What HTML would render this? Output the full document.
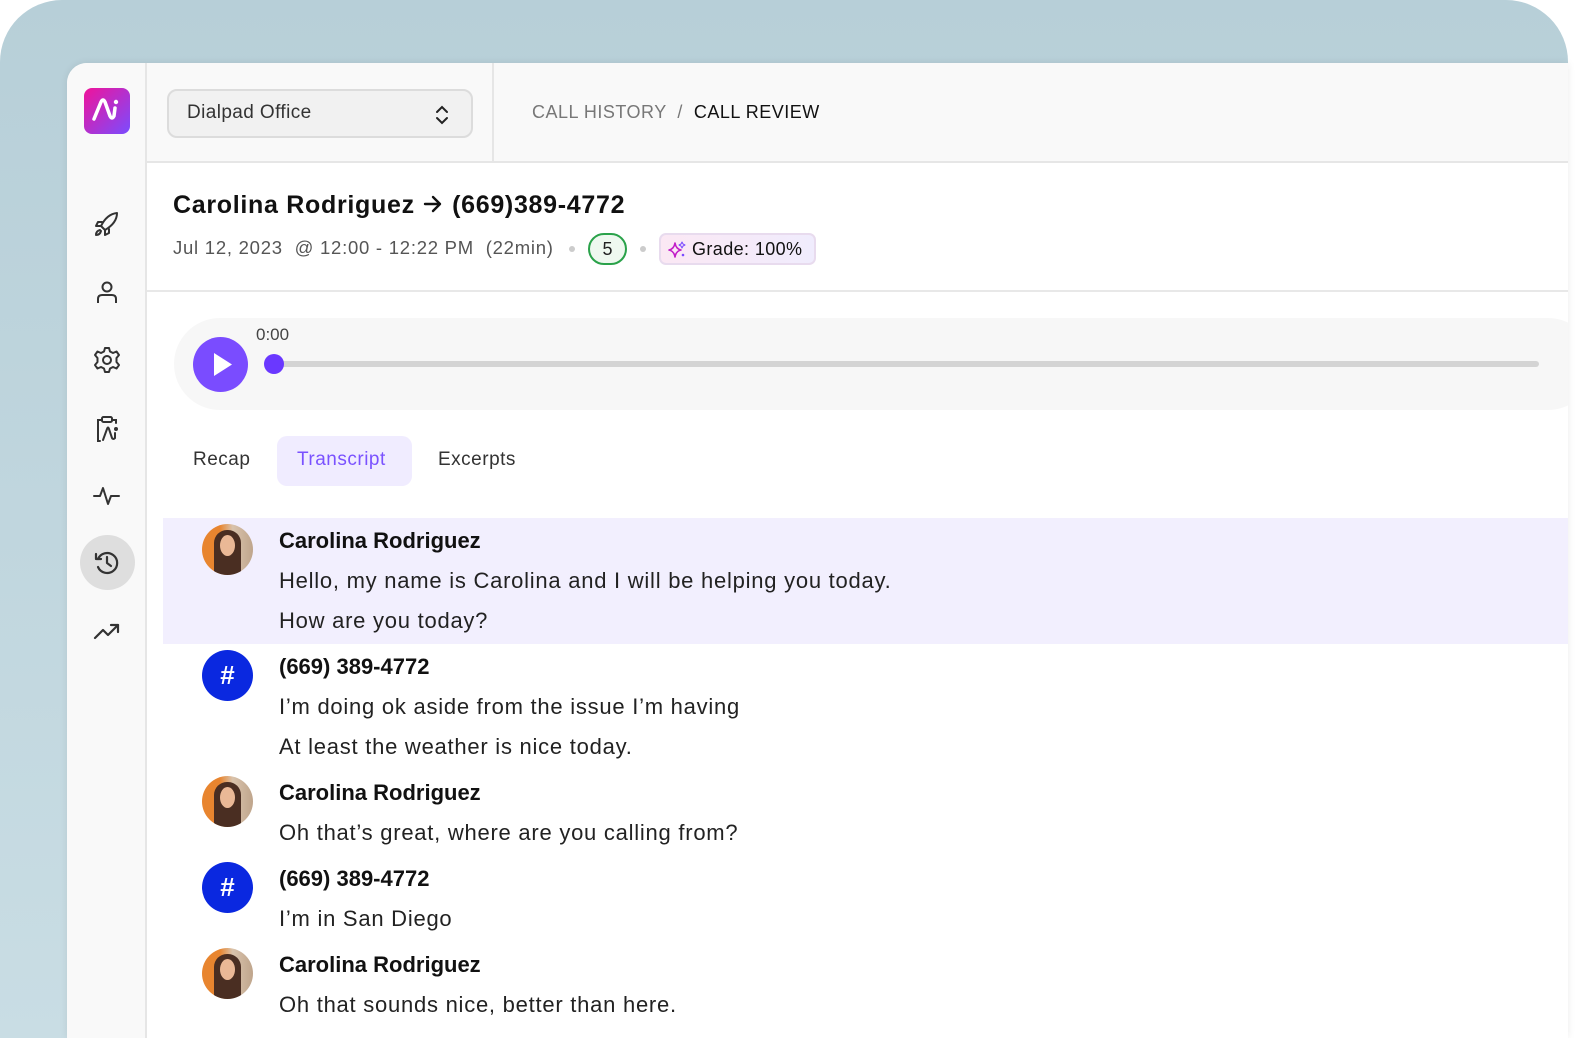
<!DOCTYPE html>
<html><head><meta charset="utf-8"><style>
*{box-sizing:border-box;margin:0;padding:0}
html,body{width:1596px;height:1038px;overflow:hidden;background:#fff;font-family:"Liberation Sans",sans-serif}
.bg{position:absolute;left:0;top:0;width:1568px;height:1038px;border-radius:62px 62px 0 0;background:linear-gradient(180deg,#b7cfd8,#c9dde4)}
.win{position:absolute;left:67px;top:63px;width:1501px;height:975px;background:#fff;border-radius:20px 0 0 0;overflow:hidden;box-shadow:0 0 8px rgba(0,0,0,.08)}
.side{position:absolute;left:0;top:0;width:80px;height:100%;background:#f9f9f9;border-right:2px solid #e6e6e6}
.logo{position:absolute;left:17px;top:25px;width:46px;height:46px;border-radius:8px;background:linear-gradient(135deg,#f0139a,#7a4cff)}
.ic{position:absolute;left:24px;width:32px;height:32px}
.hist{position:absolute;left:13px;top:472px;width:55px;height:55px;border-radius:50%;background:#dedede}
.hdr{position:absolute;left:80px;top:0;right:0;height:100px;background:#f9f9f9;border-bottom:2px solid #e6e6e6}
.sel{position:absolute;left:20px;top:26px;width:306px;height:49px;border:2px solid #dcdcdc;border-radius:10px;background:#f1f1f1;font-size:19px;letter-spacing:.4px;color:#333;padding:11px 0 0 18px}
.vd{position:absolute;left:345px;top:0;width:2px;height:100px;background:#e6e6e6}
.bc{position:absolute;left:385px;top:39px;font-size:18px;letter-spacing:.5px;color:#777}
.bc b{font-weight:normal;color:#111}
.title{position:absolute;left:106px;top:128px;font-size:25px;letter-spacing:.7px;font-weight:bold;color:#111}
.meta{position:absolute;left:106px;top:174px;font-size:18.5px;letter-spacing:.75px;color:#555;white-space:pre}
.dot{position:absolute;width:6px;height:6px;border-radius:50%;background:#ccc;top:183px}
.five{position:absolute;left:521px;top:170px;width:39px;height:32px;border:2px solid #2aa24a;border-radius:16px;background:#eef8ef;text-align:center;font-size:18px;color:#222;line-height:28px}
.grade{position:absolute;left:592px;top:170px;width:157px;height:32px;border:2px solid #e8dbee;border-radius:7px;background:linear-gradient(90deg,#fbe8f4,#f0ecfd);font-size:18px;letter-spacing:.4px;color:#111;padding:4px 0 0 31px}
.hr2{position:absolute;left:80px;right:0;top:227px;height:2px;background:#e8e8e8}
.player{position:absolute;left:107px;top:255px;width:1420px;height:92px;border-radius:46px;background:#f7f7f7}
.play{position:absolute;left:19px;top:19px;width:55px;height:55px;border-radius:50%;background:#7a4cff}
.track{position:absolute;left:95px;top:43px;width:1270px;height:6px;border-radius:3px;background:#d4d4d4}
.knob{position:absolute;left:90px;top:36px;width:20px;height:20px;border-radius:50%;background:#6a38ff}
.time{position:absolute;left:82px;top:7px;font-size:17px;color:#444}
.tab{position:absolute;top:373px;height:50px;font-size:19px;letter-spacing:.5px;color:#333;padding-top:13px}
.tab.on{background:#f0ecff;color:#7a52ff;border-radius:10px;padding-left:20px;width:135px}
.msg{position:absolute;left:96px;width:1420px}
.msg.hl{background:#f2effe}
.av{position:absolute;left:39px;width:51px;height:51px;border-radius:50%;overflow:hidden}
.ph{background:linear-gradient(90deg,#e8852f 0 35%,#d9c3ac 60%,#bfa58c)}
.ph::before{content:"";position:absolute;left:12px;top:6px;width:27px;height:50px;border-radius:13px 13px 4px 4px;background:#4a2e22}
.ph::after{content:"";position:absolute;left:18px;top:11px;width:15px;height:21px;border-radius:50%;background:#eab896}
.hs{background:#0a28e0;color:#fff;font-size:26px;font-weight:bold;text-align:center;line-height:51px}
.n{position:absolute;left:116px;font-size:22px;font-weight:bold;color:#111}
.t{position:absolute;left:116px;font-size:22px;letter-spacing:.75px;color:#222;white-space:nowrap}
</style></head><body>
<div class="bg"></div>
<div class="win">
 <div class="side">
  <div class="logo"><svg width="46" height="46" viewBox="0 0 46 46"><path d="M10 31 L17 14 Q19 10 21 14 L26 28 Q28 32 30 28 L31 20" fill="none" stroke="#fff" stroke-width="3.5" stroke-linecap="round"/><circle cx="32" cy="14" r="2.2" fill="#fff"/></svg></div>
  <svg class="ic" style="top:145px" viewBox="0 0 32 32" fill="none" stroke="#333" stroke-width="2" stroke-linecap="round" stroke-linejoin="round"><path d="M14 22 L10 18 Q16 6 26 5 Q26 15 14 22Z"/><path d="M11 14 H7 L5 18 H10"/><path d="M18 21 V25 L14 27 V22"/><path d="M9 22 Q5 23 5 27 Q9 27 10 23"/></svg>
  <svg class="ic" style="top:213px" viewBox="0 0 32 32" fill="none" stroke="#333" stroke-width="2"><circle cx="16" cy="11" r="4.5"/><path d="M7 27 V23 Q7 19 11 19 H21 Q25 19 25 23 V27"/></svg>
  <svg class="ic" style="top:281px" viewBox="0 0 32 32" fill="none" stroke="#333" stroke-width="2"><circle cx="16" cy="16" r="4"/><path d="M14 4 H18 L19 7.5 L22 9 L25.5 7.5 L28 11 L25.5 14 V18 L28 21 L25.5 24.5 L22 23 L19 24.5 L18 28 H14 L13 24.5 L10 23 L6.5 24.5 L4 21 L6.5 18 V14 L4 11 L6.5 7.5 L10 9 L13 7.5Z" stroke-linejoin="round"/></svg>
  <svg class="ic" style="top:350px" viewBox="0 0 32 32" fill="none" stroke="#333" stroke-width="2" stroke-linecap="round"><path d="M10 7 H7 V28 H9"/><path d="M22 7 H25 V10"/><rect x="11" y="4" width="10" height="5" rx="1.5"/><path d="M12 27 L16 16 Q17 13 18 16 L21 25 Q22 27 24 25 V20"/><circle cx="25" cy="16" r="1" fill="#333"/></svg>
  <svg class="ic" style="top:417px" viewBox="0 0 32 32" fill="none" stroke="#333" stroke-width="2" stroke-linecap="round" stroke-linejoin="round"><path d="M3 16 H9 L12 8 L17 24 L20 16 H28"/></svg>
  <div class="hist"></div>
  <svg class="ic" style="top:484px" viewBox="0 0 32 32" fill="none" stroke="#333" stroke-width="2.2" stroke-linecap="round" stroke-linejoin="round"><path d="M7 12 A10 10 0 1 1 7 20"/><path d="M5 7 V12 H10"/><path d="M16 10 V16 L20 19"/></svg>
  <svg class="ic" style="top:552px" viewBox="0 0 32 32" fill="none" stroke="#333" stroke-width="2.2" stroke-linecap="round" stroke-linejoin="round"><path d="M4 23 L12 15 L17 20 L27 10"/><path d="M20 10 H27 V17"/></svg>
 </div>
 <div class="hdr">
  <div class="sel">Dialpad Office
   <svg style="position:absolute;left:266px;top:14px" width="14" height="20" viewBox="0 0 14 20" fill="none" stroke="#222" stroke-width="2" stroke-linecap="round"><path d="M2 7 L7 2 L12 7 M2 13 L7 18 L12 13"/></svg></div>
  <div class="vd"></div>
  <div class="bc">CALL HISTORY &nbsp;/ &nbsp;<b>CALL REVIEW</b></div>
 </div>
 <div class="title">Carolina Rodriguez <svg width="22" height="18" viewBox="0 0 22 18" style="vertical-align:0" fill="none" stroke="#111" stroke-width="2.4" stroke-linecap="round" stroke-linejoin="round"><path d="M3 9 H18 M11 2 L18 9 L11 16"/></svg> (669)389-4772</div>
 <div class="meta">Jul 12, 2023  @ 12:00 - 12:22 PM  (22min)</div>
 <div class="dot" style="left:502px"></div>
 <div class="five">5</div>
 <div class="dot" style="left:573px"></div>
 <div class="grade"><svg style="position:absolute;left:7px;top:6px" width="18" height="18" viewBox="0 0 18 18" fill="none" stroke="#c21ec8" stroke-width="1.6" stroke-linejoin="round"><path d="M7 2 Q8 8 13 9 Q8 10 7 16 Q6 10 1 9 Q6 8 7 2Z"/><path d="M14 1 L15 3 L17 4 L15 5 L14 7 L13 5 L11 4 L13 3Z" stroke="#7a4cff" stroke-width="1"/><circle cx="15" cy="14" r="1.3" fill="#7a4cff" stroke="none"/></svg>Grade: 100%</div>
 <div class="hr2"></div>
 <div class="player">
  <div class="play"><svg width="55" height="55"><path d="M21 16 L39 27.5 L21 39Z" fill="#fff"/></svg></div>
  <div class="time">0:00</div>
  <div class="track"></div><div class="knob"></div>
 </div>
 <div class="tab" style="left:126px">Recap</div>
 <div class="tab on" style="left:210px">Transcript</div>
 <div class="tab" style="left:371px">Excerpts</div>

 <div class="msg hl" style="top:455px;height:126px"></div>
 <div class="msg" style="top:455px">
  <div class="av ph" style="top:6px"></div>
  <div class="n" style="top:10px">Carolina Rodriguez</div>
  <div class="t" style="top:50px">Hello, my name is Carolina and I will be helping you today.</div>
  <div class="t" style="top:90px">How are you today?</div>
 </div>
 <div class="msg" style="top:581px">
  <div class="av hs" style="top:6px">#</div>
  <div class="n" style="top:10px">(669) 389-4772</div>
  <div class="t" style="top:50px">I’m doing ok aside from the issue I’m having</div>
  <div class="t" style="top:90px">At least the weather is nice today.</div>
 </div>
 <div class="msg" style="top:707px">
  <div class="av ph" style="top:6px"></div>
  <div class="n" style="top:10px">Carolina Rodriguez</div>
  <div class="t" style="top:50px">Oh that’s great, where are you calling from?</div>
 </div>
 <div class="msg" style="top:793px">
  <div class="av hs" style="top:6px">#</div>
  <div class="n" style="top:10px">(669) 389-4772</div>
  <div class="t" style="top:50px">I’m in San Diego</div>
 </div>
 <div class="msg" style="top:879px">
  <div class="av ph" style="top:6px"></div>
  <div class="n" style="top:10px">Carolina Rodriguez</div>
  <div class="t" style="top:50px">Oh that sounds nice, better than here.</div>
 </div>
</div>
</body></html>
